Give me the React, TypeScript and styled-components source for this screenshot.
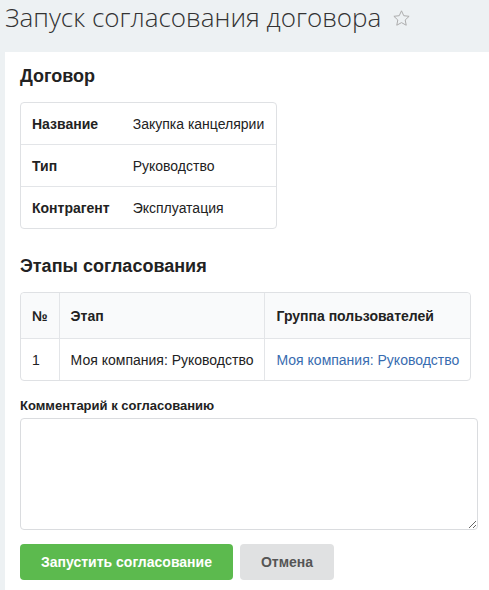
import styled, { createGlobalStyle } from "styled-components";

const GlobalStyle = createGlobalStyle`
  html, body {
    margin: 0;
    padding: 0;
    background: #edf1f3;
    overflow: hidden;
  }
  body {
    font-family: "Liberation Sans", Arial, sans-serif;
    font-size: 14px;
    color: #222;
  }
`;

const Page = styled.div`
  padding-left: 5px;
  width: 484px;
`;

const TitleRow = styled.div`
  display: flex;
  align-items: flex-start;
  gap: 10px;
  height: 52px;
  padding-top: 2px;
  box-sizing: border-box;
`;

const Title = styled.h1`
  margin: 0;
  font-family: "Open Sans", sans-serif;
  font-weight: 300;
  font-size: 26px;
  line-height: 30px;
  color: #333;
`;

const StarIcon = styled.svg`
  width: 21px;
  height: 21px;
  margin-top: 6px;
`;

const Panel = styled.div`
  box-sizing: border-box;
  background: #fff;
  padding: 12px 15px 10px;
  min-height: 538px;
`;

const SectionTitle = styled.h2`
  margin: 0 0 14px;
  font-size: 18px;
  font-weight: 700;
  line-height: 24px;
  color: #222;
`;

const InfoTable = styled.table`
  border-collapse: separate;
  border-spacing: 0;
  border: 1px solid #dfe1e4;
  border-radius: 4px;
  margin-bottom: 25px;

  td {
    height: 41px;
    padding: 0 12px 0 11px;
    border-top: 1px solid #e3e5e8;
    white-space: nowrap;
  }
  tr:first-child td {
    border-top: none;
  }
  td:first-child {
    font-weight: 700;
    width: 76px;
  }
`;

const StageTable = styled.table`
  width: 451px;
  border-collapse: separate;
  border-spacing: 0;
  border: 1px solid #dfe1e4;
  border-radius: 4px;
  margin-bottom: 17px;

  th {
    height: 45px;
    background: #f9fafb;
    text-align: left;
    font-weight: 700;
    padding: 0 11px;
    border-left: 1px solid #e3e5e8;
  }
  td {
    height: 41px;
    padding: 0 11px;
    border-top: 1px solid #e3e5e8;
    border-left: 1px solid #e3e5e8;
    white-space: nowrap;
  }
  th:first-child {
    border-top-left-radius: 4px;
  }
  th:last-child {
    border-top-right-radius: 4px;
  }
  th:first-child,
  td:first-child {
    border-left: none;
    width: 16px;
  }
`;

const GroupLink = styled.a`
  color: #386cb0;
  text-decoration: none;
`;

const FieldLabel = styled.label`
  display: block;
  font-size: 13px;
  font-weight: 700;
  line-height: 16px;
  margin-bottom: 4px;
`;

const Comment = styled.textarea`
  display: block;
  box-sizing: border-box;
  width: 458px;
  height: 112px;
  border: 1px solid #dadcdf;
  border-radius: 4px;
  margin-bottom: 14px;
  font-family: inherit;
  font-size: 14px;
`;

const Actions = styled.div`
  display: flex;
  gap: 7px;
`;

const Button = styled.button<{ $primary?: boolean }>`
  height: 36px;
  padding: 0 21px;
  border: none;
  border-radius: 4px;
  font-family: inherit;
  font-size: 14px;
  font-weight: 700;
  background: ${(p) => (p.$primary ? "#5cba4e" : "#e0e1e2")};
  color: ${(p) => (p.$primary ? "#fff" : "#555")};
  cursor: pointer;
`;

export default function App() {
  return (
    <>
      <GlobalStyle />
      <Page>
        <TitleRow>
          <Title>Запуск согласования договора</Title>
          <StarIcon viewBox="0 0 24 24" fill="none" stroke="#aaa" strokeWidth="1.1" strokeLinejoin="round">
            <path d="M12 3.2l2.6 5.6 6.1.7-4.5 4.2 1.2 6-5.4-3-5.4 3 1.2-6-4.5-4.2 6.1-.7z" />
          </StarIcon>
        </TitleRow>
        <Panel>
          <SectionTitle>Договор</SectionTitle>
          <InfoTable>
            <tbody>
              <tr>
                <td>Название</td>
                <td>Закупка канцелярии</td>
              </tr>
              <tr>
                <td>Тип</td>
                <td>Руководство</td>
              </tr>
              <tr>
                <td>Контрагент</td>
                <td>Эксплуатация</td>
              </tr>
            </tbody>
          </InfoTable>

          <SectionTitle>Этапы согласования</SectionTitle>
          <StageTable>
            <thead>
              <tr>
                <th>№</th>
                <th>Этап</th>
                <th>Группа пользователей</th>
              </tr>
            </thead>
            <tbody>
              <tr>
                <td>1</td>
                <td>Моя компания: Руководство</td>
                <td>
                  <GroupLink href="#">Моя компания: Руководство</GroupLink>
                </td>
              </tr>
            </tbody>
          </StageTable>

          <FieldLabel htmlFor="comment">Комментарий к согласованию</FieldLabel>
          <Comment id="comment" />
          <Actions>
            <Button $primary>Запустить согласование</Button>
            <Button>Отмена</Button>
          </Actions>
        </Panel>
      </Page>
    </>
  );
}
